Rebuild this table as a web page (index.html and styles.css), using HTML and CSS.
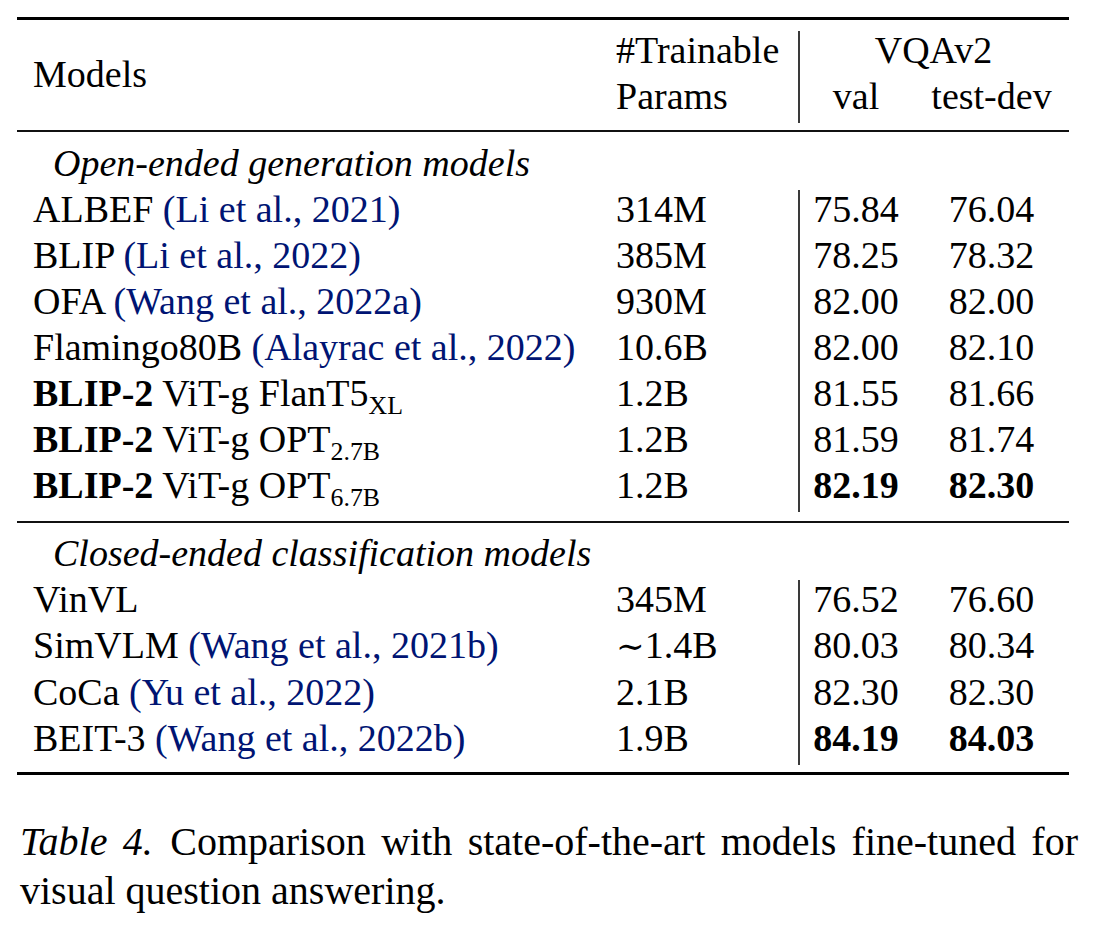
FILE: index.html
```html
<!DOCTYPE html>
<html>
<head>
<meta charset="utf-8">
<link rel="stylesheet" href="styles.css">
</head>
<body>
<div class="figure">
  <div class="tbl">
    <div class="rule thick"></div>
    <div class="gap g11"></div>

    <div class="cell c1 hdr-models">Models</div>
    <div class="cell c2">#Trainable</div>
    <div class="cell c34 bar">VQAv2</div>
    <div class="cell c2">Params</div>
    <div class="cell c3 bar">val</div>
    <div class="cell c4">test-dev</div>

    <div class="gap g7"></div>
    <div class="rule thin"></div>
    <div class="gap g12"></div>

    <div class="cell group">Open-ended generation models</div>

    <div class="cell c1">ALBEF <span class="cite">(Li et al., 2021)</span></div>
    <div class="cell c2">314M</div>
    <div class="cell c3 bar">75.84</div>
    <div class="cell c4">76.04</div>

    <div class="cell c1">BLIP <span class="cite">(Li et al., 2022)</span></div>
    <div class="cell c2">385M</div>
    <div class="cell c3 bar">78.25</div>
    <div class="cell c4">78.32</div>

    <div class="cell c1">OFA <span class="cite">(Wang et al., 2022a)</span></div>
    <div class="cell c2">930M</div>
    <div class="cell c3 bar">82.00</div>
    <div class="cell c4">82.00</div>

    <div class="cell c1">Flamingo80B <span class="cite">(Alayrac et al., 2022)</span></div>
    <div class="cell c2">10.6B</div>
    <div class="cell c3 bar">82.00</div>
    <div class="cell c4">82.10</div>

    <div class="cell c1"><b>BLIP-2</b> ViT-g FlanT5<span class="sub">XL</span></div>
    <div class="cell c2">1.2B</div>
    <div class="cell c3 bar">81.55</div>
    <div class="cell c4">81.66</div>

    <div class="cell c1"><b>BLIP-2</b> ViT-g OPT<span class="sub">2.7B</span></div>
    <div class="cell c2">1.2B</div>
    <div class="cell c3 bar">81.59</div>
    <div class="cell c4">81.74</div>

    <div class="cell c1"><b>BLIP-2</b> ViT-g OPT<span class="sub">6.7B</span></div>
    <div class="cell c2">1.2B</div>
    <div class="cell c3 bar"><b>82.19</b></div>
    <div class="cell c4"><b>82.30</b></div>

    <div class="gap g9"></div>
    <div class="rule thin"></div>
    <div class="gap g11"></div>

    <div class="cell group">Closed-ended classification models</div>

    <div class="cell c1">VinVL</div>
    <div class="cell c2">345M</div>
    <div class="cell c3 bar">76.52</div>
    <div class="cell c4">76.60</div>

    <div class="cell c1">SimVLM <span class="cite">(Wang et al., 2021b)</span></div>
    <div class="cell c2"><span class="sim">∼</span>1.4B</div>
    <div class="cell c3 bar">80.03</div>
    <div class="cell c4">80.34</div>

    <div class="cell c1">CoCa <span class="cite">(Yu et al., 2022)</span></div>
    <div class="cell c2">2.1B</div>
    <div class="cell c3 bar">82.30</div>
    <div class="cell c4">82.30</div>

    <div class="cell c1">BEIT-3 <span class="cite">(Wang et al., 2022b)</span></div>
    <div class="cell c2">1.9B</div>
    <div class="cell c3 bar"><b>84.19</b></div>
    <div class="cell c4"><b>84.03</b></div>

    <div class="gap g7"></div>
    <div class="rule thick"></div>
  </div>

  <p class="caption"><i class="cap-label">Table 4.</i> Comparison with state-of-the-art models fine-tuned for visual question answering.</p>
</div>
</body>
</html>
```

FILE: styles.css
```css
html, body {
  margin: 0;
  padding: 0;
  background: #ffffff;
}

body {
  font-family: "Liberation Serif", "Times New Roman", serif;
  color: #000000;
}

.figure {
  width: 1097px;
}

.tbl {
  display: grid;
  grid-template-columns: 583px 198px 116px 155px;
  margin: 17px 0 0 17px;
  width: 1052px;
  font-size: 38px;
}

.rule {
  grid-column: 1 / -1;
  background: #000000;
}

.rule.thick {
  height: 3px;
}

.rule.thin {
  height: 2px;
  background: #111111;
}

.gap {
  grid-column: 1 / -1;
}

.g7 { height: 7px; }
.g9 { height: 9px; }
.g11 { height: 11px; }
.g12 { height: 12px; }

.cell {
  line-height: 38px;
  padding-bottom: 8px;
  white-space: nowrap;
}

.c1 {
  padding-left: 16px;
}

.c2 {
  padding-left: 16px;
}

.c3,
.c4 {
  text-align: center;
}

.c34 {
  grid-column: span 2;
  text-align: center;
}

.bar {
  box-shadow: inset 2px 0 0 #3a3a3a;
}

.hdr-models {
  grid-row: span 2;
  display: flex;
  align-items: center;
  padding-top: 2px;
  padding-bottom: 8px;
}

.group {
  grid-column: 1 / -1;
  font-style: italic;
  padding-left: 36px;
}

.cite {
  color: #001473;
}

.sub {
  font-size: 0.68em;
  line-height: 0;
  vertical-align: -0.3em;
}

.sim {
  font-family: "DejaVu Serif", "Liberation Serif", serif;
  font-size: 0.9em;
}

.caption {
  margin: 42px 0 0 20px;
  width: 1058px;
  font-size: 40px;
  line-height: 49px;
  text-align: justify;
}

.cap-label {
  margin-right: 2px;
}
```
